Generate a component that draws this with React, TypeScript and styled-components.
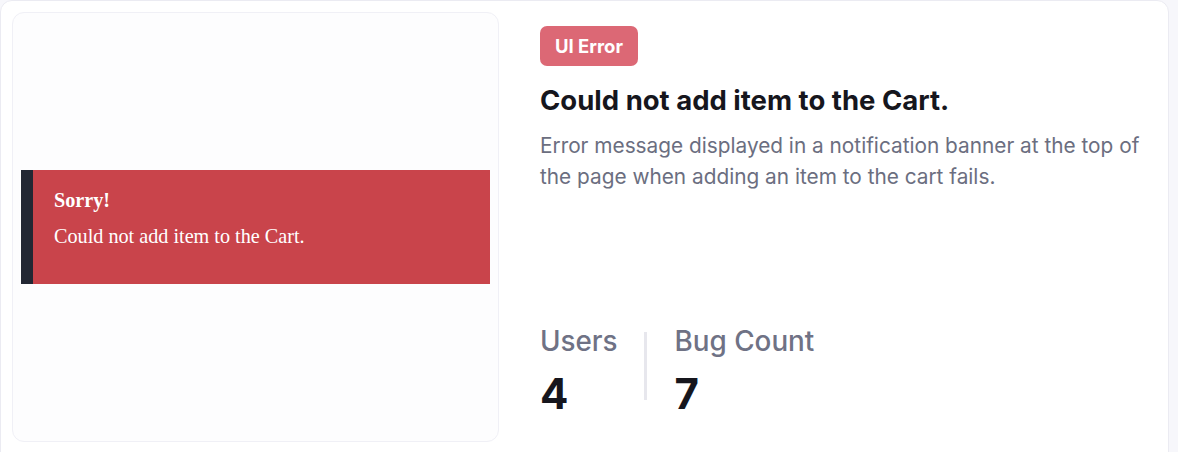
import React from "react";
import styled, { createGlobalStyle } from "styled-components";

const Global = createGlobalStyle`
  html, body { margin: 0; padding: 0; background: #f7f7fb; }
  body { font-family: Inter, "Noto Sans", sans-serif; overflow: hidden; }
`;

const Card = styled.div`
  box-sizing: border-box;
  width: 1169px;
  height: 470px;
  background: #ffffff;
  border: 1px solid #ebebf2;
  border-radius: 12px;
  padding: 11px 0 0 11px;
  display: flex;
  gap: 41px;
`;

const Preview = styled.div`
  box-sizing: border-box;
  width: 487px;
  height: 430px;
  border: 1px solid #f0f0f6;
  border-radius: 12px;
  background: #fdfdfe;
  display: flex;
  align-items: center;
  padding: 0 8px;
`;

const Banner = styled.div`
  flex: 1;
  height: 114px;
  display: flex;
  background: #c9444b;
`;

const Strip = styled.div`
  width: 12px;
  background: #222733;
`;

const BannerBody = styled.div`
  padding: 18px 21px;
  color: #ffffff;
  font-family: "Liberation Serif", "Times New Roman", serif;
  font-size: 20.2px;
  line-height: 24px;
`;

const BannerTitle = styled.div`
  font-weight: 700;
`;

const BannerText = styled.div`
  margin-top: 12px;
`;

const Info = styled.div`
  display: flex;
  flex-direction: column;
  align-items: flex-start;
  padding-top: 14px;
`;

const Badge = styled.span`
  display: inline-block;
  height: 40px;
  line-height: 40px;
  padding: 0 15px;
  border-radius: 7px;
  background: #dc6875;
  color: #ffffff;
  font-size: 18.5px;
  font-weight: 650;
`;

const Title = styled.h2`
  margin: 17px 0 0;
  font-size: 27.5px;
  line-height: 34px;
  font-weight: 650;
  color: #16161d;
`;

const Description = styled.p`
  margin: 13px 0 0;
  width: 620px;
  font-size: 20.8px;
  line-height: 31px;
  color: #6b6e80;
`;

const Stats = styled.div`
  display: flex;
  align-items: flex-start;
  margin-top: 132px;
`;

const Stat = styled.div`
  display: flex;
  flex-direction: column;
`;

const Divider = styled.div`
  width: 3px;
  height: 68px;
  margin: 8px 28px 0 26px;
  background: #e7e7ed;
`;

const StatLabel = styled.div`
  font-size: 27.8px;
  line-height: 34px;
  font-weight: 500;
  color: #6f7285;
`;

const StatValue = styled.div`
  margin-top: 12px;
  font-size: 42px;
  line-height: 48px;
  font-weight: 700;
  color: #16161d;
`;

export default function App() {
  return (
    <>
      <Global />
      <Card>
        <Preview>
          <Banner>
            <Strip />
            <BannerBody>
              <BannerTitle>Sorry!</BannerTitle>
              <BannerText>Could not add item to the Cart.</BannerText>
            </BannerBody>
          </Banner>
        </Preview>
        <Info>
          <Badge>UI Error</Badge>
          <Title>Could not add item to the Cart.</Title>
          <Description>
            Error message displayed in a notification banner at the top of the page when adding an item to the cart fails.
          </Description>
          <Stats>
            <Stat>
              <StatLabel>Users</StatLabel>
              <StatValue>4</StatValue>
            </Stat>
            <Divider />
            <Stat>
              <StatLabel>Bug Count</StatLabel>
              <StatValue>7</StatValue>
            </Stat>
          </Stats>
        </Info>
      </Card>
    </>
  );
}
